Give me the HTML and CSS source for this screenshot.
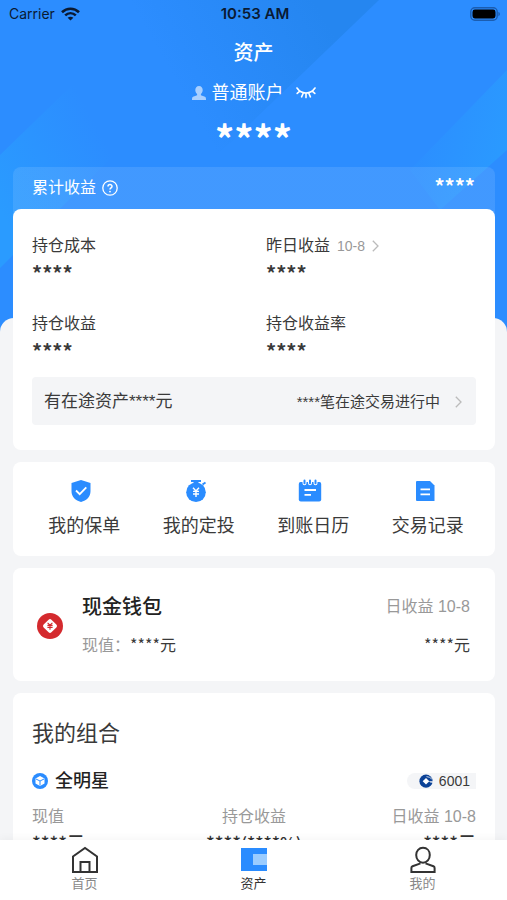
FILE: index.html
```
<!DOCTYPE html>
<html lang="zh-CN">
<head>
    <meta charset="UTF-8">
    <meta name="viewport" content="width=device-width, initial-scale=1.0">
    <title>资产</title>
    <link rel="stylesheet" href="styles.css">
</head>
<body>
    <main class="page">
        <svg class="backdrop" viewBox="0 0 507 360" preserveAspectRatio="none" aria-hidden="true">
            <defs>
                <linearGradient id="shade" gradientUnits="userSpaceOnUse" x1="180" y1="90" x2="320" y2="10">
                    <stop offset="0" stop-color="#2586f0" stop-opacity="0"/>
                    <stop offset="1" stop-color="#2586f0"/>
                </linearGradient>
                <linearGradient id="glow" gradientUnits="userSpaceOnUse" x1="0" y1="210" x2="110" y2="150">
                    <stop offset="0" stop-color="#2a9bff"/>
                    <stop offset="1" stop-color="#2a9bff" stop-opacity="0"/>
                </linearGradient>
                <linearGradient id="glow-right" gradientUnits="userSpaceOnUse" x1="507" y1="150" x2="430" y2="130">
                    <stop offset="0" stop-color="#2a9aff"/>
                    <stop offset="1" stop-color="#2a9aff" stop-opacity="0.2"/>
                </linearGradient>
            </defs>
            <rect width="507" height="360" fill="#2c8dff"/>
            <path d="M100 0H379L279 96L150 220Z" fill="url(#shade)"/>
            <path d="M0 155L160 0V110L13 255L0 268Z" fill="url(#glow)"/>
            <path d="M507 70L410 170L440 210L507 150Z" fill="url(#glow-right)"/>
        </svg>

        <div class="status-bar">
            <span class="carrier">
                Carrier
                <svg width="19" height="14" viewBox="0 0 19 14" fill="none" stroke="#0a1a33" stroke-width="2.6">
                    <path d="M1 5.2C5.8 .6 13.2 .6 18 5.2"/>
                    <path d="M4.2 8.4C7.3 5.5 11.7 5.5 14.8 8.4"/>
                    <path d="M9.5 13.6L6.6 10.7C8.3 9.3 10.7 9.3 12.4 10.7Z" fill="#0a1a33" stroke="none"/>
                </svg>
            </span>
            <span class="time">10:53 AM</span>
            <svg class="battery" width="31" height="14" viewBox="0 0 31 14">
                <rect x=".8" y=".8" width="26.4" height="12.4" rx="4" fill="none" stroke="#1b5db0" stroke-width="1.4"/>
                <rect x="2.5" y="2.5" width="23" height="9" rx="2.4" fill="#000"/>
                <path d="M28.4 5V9.2C30.4 8.6 30.4 5.6 28.4 5Z" fill="#1b5db0"/>
            </svg>
        </div>

        <header class="hero">
            <h1>资产</h1>
            <div class="account">
                <svg width="14" height="14" viewBox="0 0 14 14" fill="#a9d0ff">
                    <path d="M7 0C9.3 0 10.7 1.7 10.7 4C10.7 5.8 10 7.1 8.9 8V9.3L13 10.8Q14 11.3 14 13V14H0V13Q0 11.3 1 10.8L5.1 9.3V8C4 7.1 3.3 5.8 3.3 4C3.3 1.7 4.7 0 7 0Z"/>
                </svg>
                <span>普通账户</span>
                <button class="eye" type="button" aria-label="显示金额">
                    <svg width="20" height="12" viewBox="0 0 20 12" fill="none" stroke="#fff" stroke-width="1.6" stroke-linecap="round">
                        <path d="M1 1C5.5 7.6 14.5 7.6 19 1M3.8 4.2L1.2 6.4M7.3 6L5.6 9.8M10 6.2V10.6M12.7 6L14.4 9.8M16.2 4.2L18.8 6.4"/>
                    </svg>
                </button>
            </div>
            <p class="total">****</p>
        </header>

        <div class="content">
            <section class="summary">
                <div class="summary-head">
                    <span>累计收益</span>
                    <button class="help" type="button" aria-label="说明">
                        <svg width="16" height="16" viewBox="0 0 16 16" fill="none" stroke="#fff" stroke-width="1.3">
                            <circle cx="8" cy="8" r="7.2"/>
                            <path d="M6 6.5C6 3.9 10 3.9 10 6.4C10 7.8 8 7.8 8 9.5" stroke-width="1.5"/>
                            <circle cx="8" cy="11.6" r=".9" fill="#fff" stroke="none"/>
                        </svg>
                    </button>
                    <b>****</b>
                </div>
                <div class="summary-body">
                    <dl class="stats">
                        <div>
                            <dt>持仓成本</dt>
                            <dd>****</dd>
                        </div>
                        <div>
                            <dt>
                                昨日收益
                                <small>10-8</small>
                                <svg class="arrow" width="7" height="12" viewBox="0 0 7 12"><path d="M.8 .8L6 6L.8 11.2"/></svg>
                            </dt>
                            <dd>****</dd>
                        </div>
                        <div>
                            <dt>持仓收益</dt>
                            <dd>****</dd>
                        </div>
                        <div>
                            <dt>持仓收益率</dt>
                            <dd>****</dd>
                        </div>
                    </dl>
                    <a class="transit" href="#">
                        <span>有在途资产****元</span>
                        <span class="transit-count">****笔在途交易进行中</span>
                        <svg class="arrow" width="7" height="12" viewBox="0 0 7 12"><path d="M.8 .8L6 6L.8 11.2"/></svg>
                    </a>
                </div>
            </section>

            <nav class="card actions">
                <a href="#">
                    <svg width="24" height="24" viewBox="0 0 24 24">
                        <path d="M12 1L21.5 4V12C21.5 18 17.5 21.5 12 23C6.5 21.5 2.5 18 2.5 12V4Z" fill="#2a8cff"/>
                        <path d="M7 11.5L10.7 15.2L17.3 8.4" fill="none" stroke="#fff" stroke-width="1.8"/>
                    </svg>
                    我的保单
                </a>
                <a href="#">
                    <svg width="24" height="24" viewBox="0 0 24 24">
                        <path d="M7 1H17V3H14.5V4H9.5V3H7Z" fill="#2a8cff"/>
                        <path d="M18.5 5.5L21.5 3.5" stroke="#2a8cff" stroke-width="2"/>
                        <circle cx="12" cy="13.2" r="9.8" fill="#2a8cff"/>
                        <path d="M9 8.8L12 12L15 8.8M12 12V18M9 12.4H15M9 15H15" fill="none" stroke="#fff" stroke-width="1.4"/>
                    </svg>
                    我的定投
                </a>
                <a href="#">
                    <svg width="24" height="24" viewBox="0 0 24 24">
                        <path d="M2.5 3H21.5Q23.2 3 23.2 5V20.5Q23.2 22.5 21.2 22.5H2.8Q.8 22.5 .8 20.5V5Q.8 3 2.5 3Z" fill="#2a8cff"/>
                        <path d="M6.5 1.5V4.2M12 1.5V4.2M17.5 1.5V4.2" stroke="#fff" stroke-width="4" stroke-linecap="round"/>
                        <path d="M6.5 1.5V4.2M12 1.5V4.2M17.5 1.5V4.2" stroke="#2a8cff" stroke-width="2" stroke-linecap="round"/>
                        <path d="M6.5 11H18M6.5 15.8H13" stroke="#fff" stroke-width="1.8"/>
                    </svg>
                    到账日历
                </a>
                <a href="#">
                    <svg width="24" height="24" viewBox="0 0 24 24">
                        <path d="M4 2H17L21.5 6.5V22H4Q3 22 3 21V3Q3 2 4 2Z" fill="#2a8cff"/>
                        <path d="M7.5 10.3H17M7.5 15.3H17" stroke="#fff" stroke-width="1.8"/>
                    </svg>
                    交易记录
                </a>
            </nav>

            <section class="card wallet">
                <svg width="26" height="26" viewBox="0 0 26 26">
                    <circle cx="13" cy="13" r="13" fill="#d42a2e"/>
                    <rect x="7.5" y="7.5" width="11" height="11" rx="2" fill="#fff" transform="rotate(45 13 13)"/>
                    <path d="M10.6 9.8L13 12.2L15.4 9.8M13 12V16.8M10.4 12.4H15.6M10.4 14.4H15.6" fill="none" stroke="#d42a2e" stroke-width="1.1"/>
                </svg>
                <div class="wallet-main">
                    <h2>现金钱包</h2>
                    <p class="money"><span class="muted">现值：</span>****元</p>
                </div>
                <div class="wallet-income">
                    <p class="muted">日收益 10-8</p>
                    <p class="money">****元</p>
                </div>
            </section>

            <section class="card portfolio">
                <h2>我的组合</h2>
                <div class="plan">
                    <svg width="16" height="16" viewBox="0 0 16 16">
                        <circle cx="8" cy="8" r="8" fill="#2a8cff"/>
                        <path d="M8 3L12.5 5.4V10.6L8 13L3.5 10.6V5.4Z" fill="#fff"/>
                        <path d="M4 6L8 8L12 6M8 8V12.5" fill="none" stroke="#2a8cff" stroke-width="1"/>
                    </svg>
                    <h3>全明星</h3>
                    <span class="bank">
                        <svg width="14" height="14" viewBox="0 0 14 14">
                            <circle cx="7" cy="7.2" r="6.6" fill="#0b4297"/>
                            <path d="M7 3.9L10.3 7.2L7 10.5L3.7 7.2Z" fill="#fff"/>
                            <path d="M9.8 7.2H14V8.8L11.4 8.4Z" fill="#f4f5f7"/>
                            <path d="M7.5 2.6Q10.8 2.8 12.8 5" fill="none" stroke="#f4f5f7" stroke-width=".8"/>
                        </svg>
                        6001
                    </span>
                </div>
                <dl class="metrics">
                    <div>
                        <dt>现值</dt>
                        <dd>****元</dd>
                    </div>
                    <div>
                        <dt>持仓收益</dt>
                        <dd>****<span class="rate">(****%)</span></dd>
                    </div>
                    <div>
                        <dt>日收益 10-8</dt>
                        <dd>****元</dd>
                    </div>
                </dl>
            </section>
        </div>
    </main>

    <nav class="tab-bar">
        <a href="#">
            <svg width="28" height="28" viewBox="0 0 28 28" fill="none" stroke="#333" stroke-width="2">
                <path d="M2 26V10.5L14 2L26 10.5V26ZM9.5 26V16H18.5V26"/>
            </svg>
            首页
        </a>
        <a class="active" href="#">
            <svg width="28" height="28" viewBox="0 0 28 28">
                <rect x="1" y="2" width="26" height="23" fill="#2a8cff"/>
                <rect x="13" y="8" width="14" height="11" fill="#9accff"/>
            </svg>
            资产
        </a>
        <a href="#">
            <svg width="28" height="28" viewBox="0 0 28 28" fill="none" stroke="#333" stroke-width="2">
                <path d="M14 1.8C18 1.8 20.8 4.8 20.8 9C20.8 13.2 18 16.8 14 16.8C10 16.8 7.2 13.2 7.2 9C7.2 4.8 10 1.8 14 1.8Z"/>
                <path d="M11.5 17.4L3.6 20.2Q2.4 20.8 2.4 22V26H25.6V22Q25.6 20.8 24.4 20.2L16.5 17.4"/>
            </svg>
            我的
        </a>
    </nav>
</body>
</html>
```

FILE: styles.css
```
* {
    box-sizing: border-box;
}

/* Base styles */
body {
    margin: 0;
    height: 100vh;
    display: flex;
    flex-direction: column;
    font-family: "Liberation Sans", "Noto Sans CJK SC", sans-serif;
    font-size: 16px;
    line-height: 24px;
    color: #3a3a3a;
    background-color: #f4f5f7;
}
h1, h2, h3, p, dl, dd {
    margin: 0;
}
a {
    color: inherit;
    text-decoration: none;
}
button {
    padding: 0;
    border: none;
    background: none;
    cursor: pointer;
    display: flex;
}
svg {
    flex: none;
}
.muted {
    color: #999;
}
.arrow {
    fill: none;
    stroke: #bbb;
    stroke-width: 1.3;
}

/* Scrolling page above the tab bar */
.page {
    position: relative;
    flex: 1;
    min-height: 0;
    overflow-y: auto;
    scrollbar-width: none;
}
.backdrop {
    position: absolute;
    top: 0;
    left: 0;
    width: 100%;
    height: 360px;
}

/* Status bar */
.status-bar {
    position: relative;
    display: grid;
    grid-template-columns: 1fr auto 1fr;
    align-items: center;
    height: 28px;
    padding: 0 6px 0 9px;
    font-family: Inter, sans-serif;
    font-size: 14px;
    color: #0a1a33;
}
.carrier {
    display: flex;
    align-items: center;
    gap: 6px;
}
.time {
    font-size: 15px;
    font-weight: 600;
}
.battery {
    justify-self: end;
}

/* Blue header */
.hero {
    position: relative;
    height: 139px;
    padding-top: 9px;
    text-align: center;
    color: #fff;
}
h1 {
    font-size: 20px;
    font-weight: 500;
    line-height: 32px;
}
.account {
    display: flex;
    align-items: center;
    justify-content: center;
    gap: 6px;
    margin-top: 12px;
    font-size: 18px;
}
.eye {
    margin-left: 6px;
}
.total {
    margin-top: 9px;
    font-family: "Noto Sans CJK SC", sans-serif;
    font-size: 38px;
    font-weight: 700;
    line-height: 48px;
}

/* Cards */
.content {
    position: relative;
    padding: 0 12px 12px 13px;
    display: flex;
    flex-direction: column;
    gap: 12px;
}
/* Grey sheet behind the cards */
.content::before {
    content: "";
    position: absolute;
    top: 151px;
    bottom: 0;
    left: 0;
    right: 0;
    border-radius: 14px 14px 0 0;
    background-color: #f4f5f7;
}
.card {
    position: relative;
    border-radius: 8px;
    background-color: #fff;
}

/* Income summary, the tint also shows behind the round corners of the body */
.summary {
    position: relative;
    border-radius: 8px;
    background: linear-gradient(rgba(255, 255, 255, 0.1), rgba(255, 255, 255, 0.1)) no-repeat 0 0 / 100% 60px;
}
.summary-head {
    display: flex;
    align-items: center;
    gap: 6px;
    height: 42px;
    padding: 0 20px 0 19px;
    color: #fff;
}
.summary-head b {
    margin-left: auto;
}
.summary-body {
    padding: 25px 19px;
    border-radius: 8px;
    background-color: #fff;
}
.stats {
    display: grid;
    grid-template-columns: 1fr 1fr;
    gap: 27px 24px;
}
.stats dt {
    display: flex;
    align-items: center;
    gap: 7px;
}
.stats small {
    font-size: 14px;
    color: #999;
}
.stats dd,
.summary-head b {
    font-family: "Noto Sans CJK SC", sans-serif;
    font-size: 20px;
    font-weight: 700;
}
.summary-head b {
    line-height: 20px;
    padding-bottom: 4px;
}
.stats dd {
    padding-top: 3px;
}
.transit {
    display: flex;
    align-items: center;
    height: 48px;
    margin-top: 14px;
    padding: 1px 14px 0 12px;
    border-radius: 4px;
    background-color: #f4f5f7;
    font-size: 17px;
}
.transit-count {
    margin: 0 15px 0 auto;
    font-size: 15px;
}

/* Shortcuts */
.actions {
    display: grid;
    grid-template-columns: repeat(4, 1fr);
    padding: 17px 10px 18px 14px;
}
.actions a {
    display: flex;
    flex-direction: column;
    align-items: center;
    gap: 11px;
    font-size: 18px;
}
.actions svg {
    margin-right: 6px;
}

/* Cash wallet */
.wallet {
    display: flex;
    align-items: center;
    gap: 19px;
    padding: 27px 25px 25px 24px;
}
.wallet h2 {
    font-size: 20px;
    font-weight: 500;
    line-height: 24px;
    color: #222;
}
.wallet p + p,
.wallet h2 + p {
    margin-top: 13px;
}
.wallet-main {
    flex: 1;
}
.wallet-income {
    text-align: right;
}
.money {
    font-family: "Noto Sans CJK SC", sans-serif;
}

/* Portfolio */
.portfolio {
    padding: 25px 19px;
}
.portfolio h2 {
    font-size: 22px;
    font-weight: 400;
    line-height: 32px;
}
.plan {
    display: flex;
    align-items: center;
    gap: 7px;
    margin-top: 19px;
}
.plan h3 {
    font-size: 18px;
    font-weight: 500;
    color: #222;
}
.bank {
    display: flex;
    align-items: center;
    gap: 6px;
    margin-left: auto;
    padding: 0 6px 0 12px;
    border-radius: 8px 0 0 8px;
    background-color: #f4f5f7;
    font-size: 14px;
    line-height: 16px;
}
.metrics {
    display: flex;
    justify-content: space-between;
    margin-top: 12px;
    text-align: center;
}
.metrics div {
    flex: 1;
}
.metrics div:first-child {
    text-align: left;
}
.metrics div:last-child {
    text-align: right;
}
.metrics dt {
    color: #999;
}
.metrics dd {
    font-family: "Noto Sans CJK SC", sans-serif;
    font-size: 18px;
    font-weight: 500;
    line-height: 26px;
    color: #333;
}
.rate {
    font-size: 17px;
}

/* Bottom tabs */
.tab-bar {
    position: relative;
    display: flex;
    padding: 6px 0;
    background-color: #fff;
    box-shadow: 0 -2px 8px rgba(0, 0, 0, 0.04);
}
.tab-bar a {
    flex: 1;
    display: flex;
    flex-direction: column;
    align-items: center;
    font-size: 13px;
    line-height: 20px;
    color: #888;
}
.tab-bar .active {
    color: #333;
}
```
